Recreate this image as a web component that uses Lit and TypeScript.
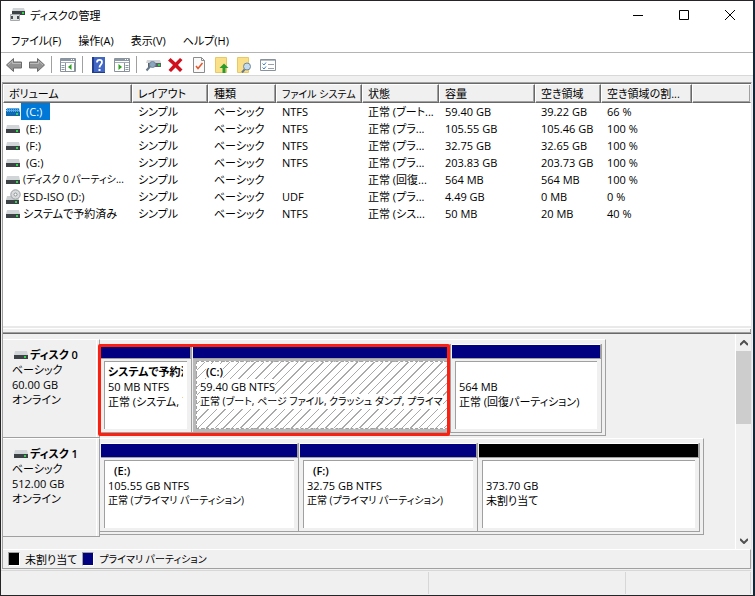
import { LitElement, html, css, svg, nothing } from "lit";
import { customElement, property } from "lit/decorators.js";
import { classMap } from "lit/directives/class-map.js";

interface Volume {
  name: string;
  icon: "drive" | "disc";
  indent: boolean;
  dense?: boolean;
  fs: string;
  status: string;
  size: string;
  free: string;
  ratio: string;
}

interface Partition {
  name: string;
  size: string;
  status: string;
  width: number;
  indent?: boolean;
  dense?: boolean;
  kind?: "unallocated";
  selected?: boolean;
}

interface Disk {
  name: string;
  size: string;
  partitions: Partition[];
}

const VOLUMES: Volume[] = [
  { name: "(C:)", icon: "drive", indent: true, fs: "NTFS", status: "正常 (ブート...", size: "59.40 GB", free: "39.22 GB", ratio: "66 %" },
  { name: "(E:)", icon: "drive", indent: true, fs: "NTFS", status: "正常 (プラ...", size: "105.55 GB", free: "105.46 GB", ratio: "100 %" },
  { name: "(F:)", icon: "drive", indent: true, fs: "NTFS", status: "正常 (プラ...", size: "32.75 GB", free: "32.65 GB", ratio: "100 %" },
  { name: "(G:)", icon: "drive", indent: true, fs: "NTFS", status: "正常 (プラ...", size: "203.83 GB", free: "203.73 GB", ratio: "100 %" },
  { name: "(ディスク 0 パーティシ...", icon: "drive", indent: false, dense: true, fs: "", status: "正常 (回復...", size: "564 MB", free: "564 MB", ratio: "100 %" },
  { name: "ESD-ISO (D:)", icon: "disc", indent: false, fs: "UDF", status: "正常 (プラ...", size: "4.49 GB", free: "0 MB", ratio: "0 %" },
  { name: "システムで予約済み", icon: "drive", indent: false, fs: "NTFS", status: "正常 (シス...", size: "50 MB", free: "20 MB", ratio: "40 %" },
];

const DISKS: Disk[] = [
  {
    name: "ディスク 0",
    size: "60.00 GB",
    partitions: [
      { name: "システムで予約済", size: "50 MB NTFS", status: "正常 (システム, ア", width: 92 },
      { name: "(C:)", size: "59.40 GB NTFS", status: "正常 (ブート, ページ ファイル, クラッシュ ダンプ, プライマ", width: 259, indent: true, dense: true, selected: true },
      { name: "", size: "564 MB", status: "正常 (回復パーティション)", width: 151 },
    ],
  },
  {
    name: "ディスク 1",
    size: "512.00 GB",
    partitions: [
      { name: "(E:)", size: "105.55 GB NTFS", status: "正常 (プライマリ パーティション)", width: 199, indent: true, dense: true },
      { name: "(F:)", size: "32.75 GB NTFS", status: "正常 (プライマリ パーティション)", width: 179, indent: true, dense: true },
      { name: "", size: "373.70 GB", status: "未割り当て", width: 222, kind: "unallocated" },
    ],
  },
];

const COLUMNS: [string, string][] = [
  ["ボリューム", "c-volume"],
  ["レイアウト", "c-layout"],
  ["種類", "c-type"],
  ["ファイル システム", "c-fs"],
  ["状態", "c-status"],
  ["容量", "c-size"],
  ["空き領域", "c-free"],
  ["空き領域の割...", "c-ratio"],
  ["", "c-rest"],
];

const driveIcon = (selected = false) => svg`<svg viewBox="0 0 14 10" width="14" height="10" aria-hidden="true">
  <path d="M1 1h12l1 4H0z" fill=${selected ? "#5fa9e0" : "#d2d5d8"}/>
  <path d="M0 5h14v4H0z" fill=${selected ? "#1166aa" : "#3d4246"}/>
  ${selected ? svg`<path d="M0 2.500h14M0 4.500h14M0 6.500h14" stroke="#0078d7" stroke-dasharray="1 1"/>` : nothing}
  <path d="M10 6h2v2h-2z" fill="#2fd64a"/>
</svg>`;

const discIcon = () => svg`<svg viewBox="0 0 15 16" width="15" height="16" aria-hidden="true">
  <path d="M1 7h11l1 4H0z" fill="#c9cccf"/>
  <path d="M0 11h13v4H0z" fill="#3d4246"/>
  <path d="M9 12h2v2H9z" fill="#2fd64a"/>
  <circle cx="9.500" cy="5.500" r="4.700" fill="#d9dbdd" stroke="#9a9ea2"/>
  <circle cx="9.500" cy="5.500" r="1.500" fill="#fff" stroke="#8d9296"/>
</svg>`;

const arrow = (flip: boolean) => svg`<svg viewBox="0 0 18 16" width="18" height="16" aria-hidden="true">
  <g transform=${flip ? "translate(18 0) scale(-1 1)" : ""}>
    <path d="M1.500 8 8.500 1.500V5h8v6h-8v3.500z" fill="#939393" stroke="#6c6c6c"/>
    <path d="M3 8 7.500 4V6.500H16" fill="none" stroke="#bcbcbc"/>
  </g>
</svg>`;

const paneIcon = (right: boolean) => svg`<svg viewBox="0 0 16 14" width="16" height="14" aria-hidden="true">
  <path d="M.5.5h15v13H.5z" fill="#fff" stroke="#8a929b"/>
  <path d="M1 1h14v2H1z" fill="#8a97a6"/>
  <path d="M11 1.500h1M13 1.500h1" stroke="#fff"/>
  <path d="M1 4.500h14" stroke="#a4adb7"/>
  ${right
    ? svg`<path d="M10.500 5v8" stroke="#8a929b"/><path d="M11.500 7.500h3M11.500 9.500h3M11.500 11.500h3" stroke="#8a97a6"/><path d="M4.500 6v6L8 9z" fill="#2ca31f"/>`
    : svg`<path d="M5.500 5v8M14.500 5v8" stroke="#8a929b"/><path d="M1.500 7.500h3M1.500 9.500h3M1.500 11.500h3" stroke="#8a97a6"/><path d="M11.500 6v6L8 9z" fill="#2ca31f"/>`}
</svg>`;

const helpIcon = () => svg`<svg viewBox="0 0 13 16" width="13" height="16" aria-hidden="true">
  <path d="M0 0h13v16H0z" fill="#4166c4"/><path d="M0 0h2v16H0z" fill="#223c8c"/><path d="M0 15h13v1H0z" fill="#223c8c"/>
  <path d="M5 5.500C5 2 10 2.200 10 5.300 10 7.500 7.500 7.700 7.500 10.500" fill="none" stroke="#fff" stroke-width="1.800"/>
  <path d="M6.500 12h2v2h-2z" fill="#fff"/>
</svg>`;

const connectIcon = () => svg`<svg viewBox="0 0 16 14" width="16" height="14" aria-hidden="true">
  <path d="M2 2h13l1 3H1z" fill="#d2d5d8"/><path d="M3 5h13v4H3z" fill="#5c6268"/>
  <path d="M13 6h2v2h-2z" fill="#2fd64a"/>
  <path d="M5 8.500 1.500 12.500" stroke="#66788a" stroke-width="2"/>
  <circle cx="7.500" cy="6.500" r="3" fill="#8ba7bd" stroke="#71889c"/>
</svg>`;

const deleteIcon = () => svg`<svg viewBox="0 0 15 14" width="15" height="14" aria-hidden="true">
  <path d="M2.500 0 7.500 4.500 12 0 14.500 2 10 7l4.500 4.500L12 14 7.500 9.500 3 14 .5 12 5 7 0 2.500z" fill="#d0101c"/>
</svg>`;

const checkDocIcon = () => svg`<svg viewBox="0 0 12 16" width="12" height="16" aria-hidden="true">
  <path d="M.5.5h8l3 3v12H.5z" fill="#fafafa" stroke="#8c8c8c"/><path d="M8.500.5v3h3" fill="none" stroke="#8c8c8c"/>
  <path d="M3 9l2 2.500L9.500 6" fill="none" stroke="#e2572b" stroke-width="1.500"/>
</svg>`;

const folderUpIcon = () => svg`<svg viewBox="0 0 14 16" width="14" height="16" aria-hidden="true">
  <path d="M.5.5h11v15H.5z" fill="#fbe08a" stroke="#e9c865"/>
  <path d="M9 6.500 13.500 11h-3v5h-3v-5h-3z" fill="#2b9c2b"/>
</svg>`;

const folderFindIcon = () => svg`<svg viewBox="0 0 15 16" width="15" height="16" aria-hidden="true">
  <path d="M.5.5h11v15H.5z" fill="#fbe08a" stroke="#e9c865"/>
  <path d="M8 12 5 15.500" stroke="#66788a" stroke-width="2"/>
  <circle cx="10" cy="9.500" r="3.500" fill="#c3dcef" stroke="#71889c"/>
</svg>`;

const listIcon = () => svg`<svg viewBox="0 0 16 12" width="16" height="12" aria-hidden="true">
  <path d="M.5.5h15v11H.5z" fill="#fff" stroke="#8a929b"/>
  <path d="M1 1.500h14" stroke="#b4bcc5"/>
  <path d="M2.500 4.500 4 6l2-2.500M2.500 8.500 4 10l2-2.500" fill="none" stroke="#3f7fd0"/>
  <path d="M8 5.500h6M8 9.500h6" stroke="#9aa3ad"/>
</svg>`;

const appIcon = () => svg`<svg viewBox="0 0 16 16" width="16" height="16" aria-hidden="true">
  <path d="M4 1h11l1 3H3z" fill="#d2d5d8"/><path d="M3 4h13v4H3z" fill="#3d4246"/>
  <path d="M13 5h2v2h-2z" fill="#2fd64a"/>
  <path d="M1.500 7.500h9v6h-9z" fill="#e2e3e4" stroke="#a5a9ad"/>
  <path d="M2 9h2v3H2zM8 9h2v3H8z" fill="#4b5054"/>
</svg>`;

@customElement("volume-table")
class VolumeTable extends LitElement {
  @property({ attribute: false }) volumes: Volume[] = [];

  static styles = css`
    :host { display: block; }
    .grid { width: 100%; table-layout: fixed; border-collapse: separate; border-spacing: 0; }
    .c-volume { width: 129px; }
    .c-layout { width: 76px; }
    .c-type { width: 68px; }
    .c-fs { width: 86px; font-size: 10px; }
    .c-status { width: 77px; }
    .c-size { width: 96px; }
    .c-free { width: 66px; }
    .c-ratio { width: 91px; }
    th, td { box-sizing: border-box; text-align: left; font-weight: 400; white-space: nowrap; overflow: hidden; }
    th {
      height: 19px;
      padding: 0 0 0 5px;
      line-height: 16px;
      background: #f0f0f0;
      border: 1px solid #fff;
      border-right-color: #696969;
      border-bottom-color: #696969;
      box-shadow: inset -1px -1px #a0a0a0;
    }
    th:last-child { border-right-color: #f0f0f0; }
    td { height: 17px; padding: 0 0 0 6px; line-height: 17px; }
    td:first-child { padding-left: 3px; }
    .volume { display: flex; align-items: center; height: 17px; }
    .icon { display: flex; flex: none; width: 15px; overflow: visible; }
    .label { padding: 0 2px; }
    .label.indent { padding: 0 8px 0 5px; }
    .label.dense { font-size: 10px; }
    .label.selected { background: #0078d7; color: #fff; }
  `;

  render() {
    return html`<table class="grid">
      <thead>
        <tr>${COLUMNS.map(([title, cls]) => html`<th scope="col" class=${cls}>${title}</th>`)}</tr>
      </thead>
      <tbody>
        ${this.volumes.map(
          (v, i) => html`<tr>
            <td>
              <div class="volume">
                <span class="icon">${v.icon === "disc" ? discIcon() : driveIcon(i === 0)}</span>
                <span class=${classMap({ label: true, indent: v.indent, dense: !!v.dense, selected: i === 0 })}>${v.name}</span>
              </div>
            </td>
            <td>シンプル</td>
            <td>ベーシック</td>
            <td>${v.fs}</td>
            <td>${v.status}</td>
            <td>${v.size}</td>
            <td>${v.free}</td>
            <td>${v.ratio}</td>
            <td></td>
          </tr>`
        )}
      </tbody>
    </table>`;
  }
}

@customElement("disk-row")
class DiskRow extends LitElement {
  @property({ attribute: false }) disk!: Disk;
  @property({ type: Boolean }) marked = false;

  static styles = css`
    :host { display: flex; position: relative; height: 99px; }
    .info {
      box-sizing: border-box;
      flex: none;
      width: 97px;
      padding: 7px 0 0 9px;
      line-height: 15px;
      border-top: 1px solid #fff;
      border-right: 1px solid #a0a0a0;
      border-bottom: 1px solid #a0a0a0;
      box-shadow: inset -2px 0 #f0f0f0, inset -3px 0 #fff;
    }
    .title { display: flex; gap: 2px; align-items: center; padding-left: 2px; font-weight: 600; }
    .parts {
      box-sizing: border-box;
      display: flex;
      height: 97px;
      padding: 4px 3px 2px 0;
      border: 1px solid #a0a0a0;
      border-top-color: #fff;
      border-left: 0;
    }
    .part { box-sizing: border-box; display: flex; flex-direction: column; padding-left: 1px; border-right: 1px solid #a0a0a0; border-bottom: 1px solid #a0a0a0; }
    .bar { box-sizing: border-box; height: 15px; background: #000080; border-top: 1px solid #fff; border-bottom: 1px solid #a0a0a0; border-right: 1px solid #a0a0a0; }
    .unallocated .bar { background: #000; }
    .frame { flex: 1; display: flex; min-height: 0; padding: 2px 4px 3px 3px; }
    .selected .frame { background: #b8b8b8; padding-right: 2px; }
    .body {
      box-sizing: border-box;
      flex: 1;
      min-width: 0;
      padding: 2px 4px 0 3px;
      line-height: 15px;
      background: #fff;
      border-top: 1px solid #a0a0a0;
      border-left: 1px solid #a0a0a0;
    }
    .selected .body { border: 1px dashed #a0a0a0; background: repeating-linear-gradient(135deg, #fff 0 5px, #aaa 5px 6px); }
    .line { display: block; height: 15px; overflow: hidden; white-space: nowrap; }
    .text { display: inline-block; }
    .selected .text { background: #fff; }
    .name { font-weight: 600; }
    .name.indent { padding-left: 6px; }
    .line.dense { font-size: 10px; }
    .mark { position: absolute; left: 95px; top: 5px; width: 346px; height: 86px; border: 3px solid #fb2010; border-radius: 2px; }
  `;

  render() {
    const d = this.disk;
    return html`
      <div class="info">
        <div class="title">${driveIcon()}<span>${d.name}</span></div>
        <div>ベーシック</div>
        <div>${d.size}</div>
        <div>オンライン</div>
      </div>
      <div class="parts">
        ${d.partitions.map(
          (p) => html`<div class=${classMap({ part: true, selected: !!p.selected, unallocated: !!p.kind })} style="width:${p.width}px">
            <div class="bar"></div>
            <div class="frame">
              <div class="body">
                <div class=${classMap({ line: true, name: true, indent: !!p.indent })}><span class="text">${p.name}</span></div>
                <div class="line"><span class="text">${p.size}</span></div>
                <div class=${classMap({ line: true, dense: !!p.dense })}><span class="text">${p.status}</span></div>
              </div>
            </div>
          </div>`
        )}
      </div>
      ${this.marked ? html`<div class="mark"></div>` : nothing}
    `;
  }
}

@customElement("app-root")
class AppRoot extends LitElement {
  static styles = css`
    :host {
      box-sizing: border-box;
      display: flex;
      flex-direction: column;
      min-height: 100vh;
      border: 1px solid #262426;
      border-right: 2px solid #14283c;
      background: #f0f0f0;
      color: #000;
      font: 11px/15px "Open Sans", "Noto Sans CJK JP", sans-serif;
      font-feature-settings: "palt";
    }
    button { padding: 0; border: 0; background: none; font: inherit; color: inherit; font-feature-settings: inherit; display: flex; align-items: center; justify-content: center; }
    .titlebar { display: flex; align-items: center; height: 28px; padding-left: 8px; background: #fff; }
    .title { flex: 1; margin: 0 0 0 5px; font-size: 11px; font-weight: 400; }
    .caption { width: 46px; height: 28px; }
    .menu { display: flex; gap: 17px; height: 23px; padding-left: 10px; background: #fff; border-bottom: 1px solid #b4b4b4; }
    .toolbar { box-sizing: border-box; display: flex; align-items: center; height: 23px; padding: 1px 0 0 1px; background: #fff; border-bottom: 1px solid #d8d8d8; }
    .tool { width: 23px; height: 20px; }
    .sep { width: 1px; height: 17px; margin: 0 4px 0 3px; background: #a0a0a0; }
    .content { flex: 1; display: flex; flex-direction: column; margin: 6px 1px 0; border: 1px solid #a0a0a0; border-right-color: #e3e3e3; border-bottom: 0; box-shadow: inset 0 1px #696969; padding-top: 1px; }
    .list { flex: 1; background: #fff; min-height: 241px; }
    .splitter { box-sizing: border-box; height: 8px; border-top: 2px solid #e9e9e9; border-bottom: 1px solid #696969; background: #f0f0f0; box-shadow: inset 0 1px #fff, inset -1px -1px #a0a0a0; }
    .graph { display: flex; height: 215px; }
    .disks { flex: 1; min-width: 0; padding-top: 5px; overflow: hidden; }
    .scroll { display: flex; flex-direction: column; align-items: center; width: 15px; border-left: 1px solid #fff; }
    .scroll button { width: 15px; height: 17px; }
    .track { flex: 1; width: 15px; }
    .thumb { height: 73px; background: #cdcdcd; }
    .legend { box-sizing: border-box; display: flex; align-items: center; height: 20px; padding-left: 5px; border-top: 1px solid #fff; border-bottom: 1px solid #a0a0a0; border-right: 1px solid #a0a0a0; }
    .key { box-sizing: border-box; width: 12px; height: 14px; margin-right: 5px; background: #000; border: 1px solid #fff; border-top-color: #a0a0a0; border-left-color: #a0a0a0; }
    .key.primary { margin-left: 5px; background: #000080; }
    .dense { font-size: 10px; }
    .status { display: grid; grid-template-columns: 428fr 197fr 125fr; height: 24px; margin: 1px 2px 0 0; border-top: 1px solid #d7d7d7; }
    .cell { margin: 1px 0; border-right: 1px solid #d7d7d7; }
  `;

  private tools = [
    ["戻る", () => arrow(false)],
    ["進む", () => arrow(true)],
    null,
    ["ツリーの表示", () => paneIcon(false)],
    null,
    ["ヘルプ", helpIcon],
    ["操作ウィンドウ", () => paneIcon(true)],
    null,
    ["接続", connectIcon],
    ["削除", deleteIcon],
    ["確認", checkDocIcon],
    ["上へ", folderUpIcon],
    ["検索", folderFindIcon],
    ["一覧", listIcon],
  ] as ([string, () => unknown] | null)[];

  render() {
    return html`
      <header class="titlebar">
        ${appIcon()}
        <h1 class="title">ディスクの管理</h1>
        <button class="caption" aria-label="最小化"><svg width="10" height="10"><path d="M0 5.500h10" stroke="#000"/></svg></button>
        <button class="caption" aria-label="最大化"><svg width="10" height="10"><path d="M.5.5h9v9h-9z" fill="none" stroke="#000"/></svg></button>
        <button class="caption" aria-label="閉じる"><svg width="10" height="10"><path d="M0 0l10 10M10 0 0 10" stroke="#000"/></svg></button>
      </header>
      <nav class="menu">
        <button>ファイル(F)</button><button>操作(A)</button><button>表示(V)</button><button>ヘルプ(H)</button>
      </nav>
      <div class="toolbar" role="toolbar">
        ${this.tools.map((t) => (t ? html`<button class="tool" aria-label=${t[0]}>${t[1]()}</button>` : html`<span class="sep"></span>`))}
      </div>
      <main class="content">
        <volume-table class="list" .volumes=${VOLUMES}></volume-table>
        <div class="splitter"></div>
        <div class="graph">
          <div class="disks">
            ${DISKS.map((d, i) => html`<disk-row .disk=${d} ?marked=${i === 0}></disk-row>`)}
          </div>
          <div class="scroll">
            <button aria-label="上へスクロール"><svg width="8" height="6"><path d="M0 5l4-4 4 4" fill="none" stroke="#505050" stroke-width="2"/></svg></button>
            <div class="track"><div class="thumb"></div></div>
            <button aria-label="下へスクロール"><svg width="8" height="6"><path d="M0 1l4 4 4-4" fill="none" stroke="#505050" stroke-width="2"/></svg></button>
          </div>
        </div>
        <div class="legend">
          <span class="key"></span><span>未割り当て</span>
          <span class="key primary"></span><span class="dense">プライマリ パーティション</span>
        </div>
      </main>
      <footer class="status"><div class="cell"></div><div class="cell"></div><div class="cell"></div></footer>
    `;
  }
}
